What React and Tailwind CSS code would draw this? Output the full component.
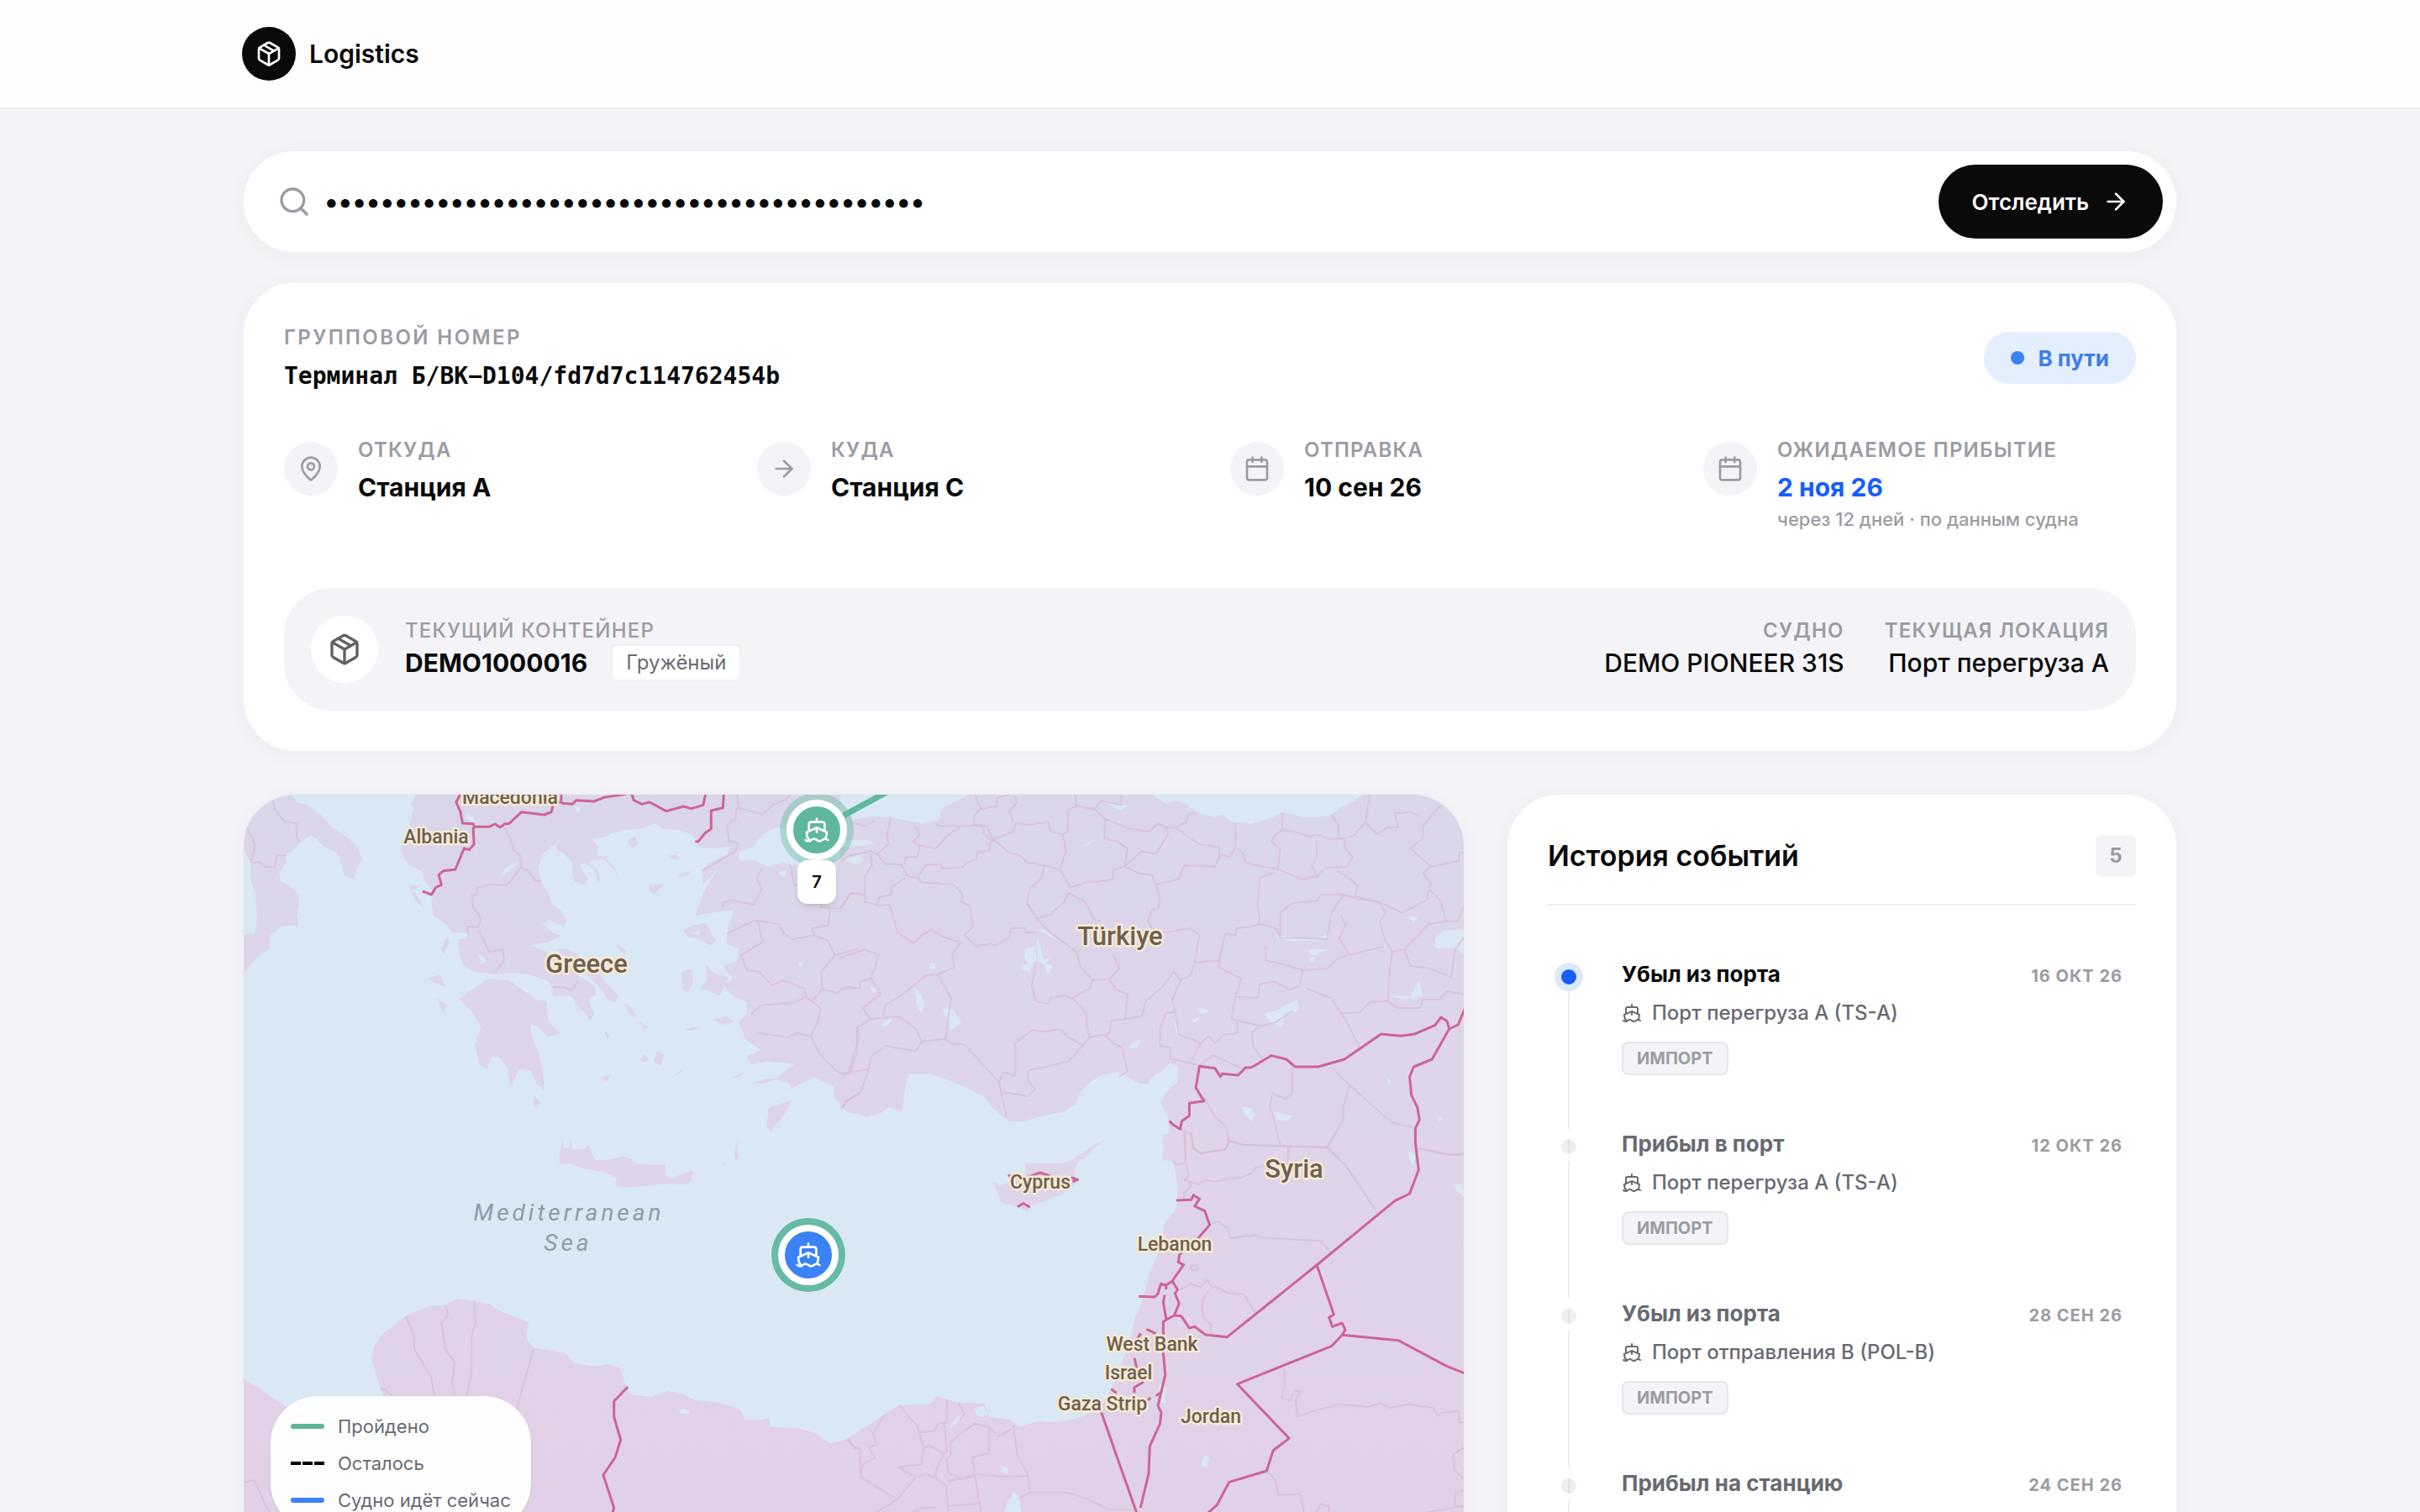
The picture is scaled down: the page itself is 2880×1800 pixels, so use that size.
import { useState } from 'react';
import { ArrowRight, Calendar, MapPin, Package, Search, Ship, TrainFront } from 'lucide-react';

const events = [
  { id: 1, title: 'Убыл из порта', place: 'Порт перегруза А (TS-A)', date: '16 ОКТ 26', icon: Ship, tag: 'ИМПОРТ' },
  { id: 2, title: 'Прибыл в порт', place: 'Порт перегруза А (TS-A)', date: '12 ОКТ 26', icon: Ship, tag: 'ИМПОРТ' },
  { id: 3, title: 'Убыл из порта', place: 'Порт отправления В (POL-B)', date: '28 СЕН 26', icon: Ship, tag: 'ИМПОРТ' },
  { id: 4, title: 'Прибыл на станцию', place: 'Станция В (ST-B)', date: '24 СЕН 26', icon: TrainFront, tag: 'ИМПОРТ' },
  { id: 5, title: 'Убыл со станции', place: 'Станция А (ST-A)', date: '10 СЕН 26', icon: TrainFront, tag: 'ИМПОРТ' },
];

// The map is drawn from four tiles, each with its own coordinate grid
const tiles = [
  {
    id: 'nw',
    transform: 'translate(-10 -16) scale(0.4719 0.33333)',
    fill: 'url(#land-north)',
    land: [
      'M22 40H140L155 75L180 85L215 120L235 150L260 180L290 210L310 240L320 280L305 320L300 352L275 335L270 310L265 275L250 250L220 230L205 205L190 195L165 215L150 240L125 265L130 290L110 330L115 360L140 375L160 410V450L155 480L160 515H140L115 520L90 545L85 600L60 625L40 650L22 690V545H50L55 480L50 400L38 350L40 290L30 270L22 240Z',
      'M455 40L445 80L450 100L440 150L430 200L418 240L420 260L440 300L470 320L480 360L500 400L495 440L500 480L535 515L545 540H585V560L560 565L565 620L575 660L600 680L660 690L700 685L740 690L760 700L790 715L800 740L800 770L830 765L850 770L860 800L880 825L895 855L905 830L890 780L910 760L905 730L870 700L845 650L800 620L770 600L745 585L790 575L820 552L800 540L775 510L790 495L830 520L835 500L820 460L800 440L790 400L770 360L765 310L775 260L810 220V245L830 260L850 290V330L855 360L885 370L890 350L875 320L870 300L880 290L905 315L915 365L920 350L915 320L895 295L900 280H930L955 320L965 335L955 305L935 270L910 265L915 235L900 205L935 200L950 185L980 175L1020 170L1060 150L1080 170L1120 175L1150 190L1165 215V235L1210 240L1250 235L1240 260L1190 295L1178 320L1178 370L1200 340L1225 300L1200 350L1180 400L1160 480L1200 470L1260 460L1250 490L1240 545V580L1270 600L1265 640L1230 660L1245 690L1255 705L1230 730L1260 770L1290 790V830L1270 860L1285 920L1300 935L1325 960L1290 985L1300 1010L1340 1000L1410 1010L1380 1040L1360 1065L1400 1080V1100L1440 1070L1460 1060L1510 1090V1130L1540 1180L1570 1190V40Z',
      'M600 740L640 705L690 710L720 740L760 780L785 785L790 860L820 900L790 915L765 880L745 865L750 920L765 970L775 1030L780 1105L760 1080L745 1035L715 1030L705 1060L695 1095L685 1020L665 985H645L635 1030L615 1010L605 940L620 880L600 830L580 800L565 780L590 750Z',
      'M810 600L840 600L900 650L930 710L965 765L960 790L940 780L915 730L880 680L840 640Z',
      'M1130 530L1155 515L1185 505L1200 540L1212 570L1200 588L1170 565L1140 555Z',
      'M1125 680L1150 670L1155 720L1140 752L1128 745Z',
      'M1185 655L1210 690L1245 700L1222 765L1195 750L1172 740L1190 710Z',
      'M515 690L530 735L500 718L485 705Z',
      'M510 775L535 800L525 825L515 800Z',
      'M436 372L468 372L450 390L475 450L455 430Z',
      'M518 600L535 555L540 575L525 620Z',
      'M1345 1165L1402 1140L1385 1190L1350 1250L1340 1240Z',
      'M755 1125L768 1145L760 1170L750 1155Z',
      'M1063 965L1082 975L1072 1018L1055 1000Z',
      'M1030 975L1042 990L1032 1008L1022 995Z',
      'M1205 850L1240 842L1260 858L1230 870Z',
      'M1135 885L1172 875L1150 895Z',
      'M1300 1080L1330 1065L1375 1060L1330 1080Z',
      'M1250 1060L1288 1038L1270 1058Z',
      'M992 205L1008 198L1018 225L1003 238L990 225Z',
      'M1045 370L1082 366L1070 385L1058 402L1043 392Z',
      'M1095 265L1112 262L1118 276L1100 280Z',
      'M1115 335L1148 320L1140 340L1120 345Z',
      'M962 580L985 605L982 620L965 598Z',
      'M980 792L1000 810L1012 845L995 835Z',
      'M1015 855L1045 882L1030 885Z',
      'M930 890L945 905L940 925Z',
      'M925 1055L945 1050L942 1070L928 1068Z',
      'M1105 1050L1132 1025L1120 1045Z',
    ],
    water: [
      'M1270 255L1305 235L1330 190L1365 165L1400 172L1420 215L1470 225L1570 240V290L1500 280L1420 300L1380 290L1340 305L1310 282L1270 285Z',
      'M668 345L680 310L715 285L700 310Z',
      'M580 110L600 130L608 150L585 135Z',
      'M858 90L872 95L862 115Z',
      'M1368 325L1390 318L1385 345Z',
      'M1420 650L1435 645L1425 665Z',
      'M612 615L635 640L620 655Z',
      'M1155 540L1175 530L1168 552Z',
    ],
    areas: [
      'M95 70L100 100L125 145L155 150V200L162 215',
      'M22 150L35 180L50 230L40 290H65L75 305H100L105 265H130',
      'M680 165L697 215L700 245L718 265L722 300L715 320L685 372L645 368L610 380L608 405H597L600 450L620 490L612 520H585V545',
      'M720 310L740 320L755 355L772 358',
      'M612 530L628 570L640 610L675 600L678 640L657 680',
      'M800 735H830L850 748L865 710',
      'M1265 46L1270 95L1330 120L1355 85L1390 65L1400 46',
      'M1265 95L1262 135L1240 155L1245 215L1268 220L1262 250L1178 320',
      'M1330 310L1315 345L1328 385L1308 440L1250 425L1230 435L1228 460',
      'M1568 400L1550 405L1525 455L1475 450L1478 430L1410 370L1400 300',
      'M1500 460L1495 515L1455 525L1460 550L1405 565L1385 545L1370 510L1325 500L1310 497L1240 545',
      'M1318 500L1330 575L1275 622L1290 675L1320 680L1355 730L1380 710L1435 740L1440 770L1475 810L1470 860L1450 910L1415 900L1395 915L1350 905L1315 900',
      'M1440 770L1410 790L1325 800L1300 835',
      'M1460 550L1495 570L1512 622L1478 680L1480 745L1455 785',
      'M1512 622L1570 600',
      'M1480 745L1520 755L1540 735L1570 740',
      'M1450 910L1480 985L1520 1040L1550 1045L1568 970V880',
      'M1568 1120L1540 1140L1530 1170',
    ],
    borders: [
      'M570 40L557 75L568 110L573 150L600 152L603 163H640L655 153L668 165L680 152H690L722 110L780 120L797 110L803 78L822 75V40',
      'M822 78L850 82L860 68L905 72L930 58L985 46',
      'M1000 46L1005 68L1025 82L1045 75L1087 107L1130 90L1150 98L1180 85L1187 40',
      'M1232 40L1230 95L1200 105V170L1185 185L1168 215H1160',
      'M600 163L602 225L590 245L577 240L555 315L525 320L513 335L520 370L505 380L495 405L472 393',
    ],
  },
  {
    id: 'ne',
    transform: 'translate(710 -16) scale(0.4847 0.33333)',
    fill: 'url(#land-north)',
    land: [
      'M0 40H1534V1354H790L795 1300L808 1270L805 1200L785 1150L800 1110L828 1075V1020L810 1005L790 1035L770 1050L755 1080H735L710 1060L680 1040L640 1050L610 1080L590 1110L580 1150L550 1180L500 1195L450 1215H415L380 1175L355 1130L310 1095L270 1070L220 1045H170L160 1090L155 1150L150 1180L120 1165L100 1185L65 1200L30 1180L0 1170Z',
      'M648 1283L620 1300L575 1350H600L622 1312Z',
    ],
    water: [
      'M0 40H325L280 75L250 95L240 140L200 150L160 140L130 130L80 125L40 135L0 120Z',
      'M760 40L800 80L825 68L850 85L880 115L920 128L935 118L960 145L1010 152L1060 130L1085 110L1140 130L1200 125L1235 90L1260 70L1290 40Z',
      'M0 212L60 210L85 222L50 232H0Z',
      'M15 270L50 268L58 285L35 297L15 285Z',
      'M455 598L478 590L482 640L462 660L452 630Z',
      'M445 655L472 655L465 680L448 672Z',
      'M183 740L200 765L207 805L198 828L188 800Z',
      'M250 805L280 820L297 865L270 888L262 850Z',
      'M100 868L130 842L118 870L105 880Z',
      'M218 652L234 650L232 672L220 670Z',
      'M483 560L492 590L498 640L520 625L505 650L522 660L510 690L500 655L484 640Z',
      'M485 530L500 530L538 570L520 558Z',
      'M1070 550L1130 562L1180 560L1200 540L1195 568L1110 572L1072 562Z',
      'M1150 600L1200 600L1165 620L1150 615Z',
      'M1148 630L1168 628L1158 650Z',
      'M1042 830L1075 815L1100 795L1120 780L1128 815L1090 840L1085 878L1055 860Z',
      'M880 810L905 815L895 832L882 828Z',
      'M862 855L885 840L872 862Z',
      'M1460 560L1480 535L1530 528V620L1515 598H1462Z',
      'M1395 480L1418 490L1405 505Z',
      'M1345 765L1400 768L1420 710L1432 770L1380 778Z',
      'M985 1165L1012 1168L1018 1190L1012 1215L995 1195Z',
      'M1062 1180L1112 1195L1095 1215L1075 1208Z',
      'M710 945L740 920L728 950L712 955Z',
      'M595 235L622 205L612 225Z',
      'M650 70L680 80L705 88L690 105L668 92Z',
      'M1466 1195L1482 1208L1470 1215Z',
      'M250 360L285 365L290 375L255 368Z',
      'M72 735L88 740L82 758Z',
      'M1340 1058L1352 1070L1348 1088Z',
      'M815 845L830 880L838 908L828 905Z',
    ],
    areas: [
      'M0 285L25 265L75 250L90 260L110 295L150 298L165 340L190 345L200 362L280 368L300 405L298 430L318 445L325 520L305 550L335 590L370 580L380 588L415 560L420 525H455V540H480',
      'M125 130L115 185L118 225L90 260',
      'M0 455L25 400L62 405L60 430L95 445L120 440L130 480L140 540L180 578L200 550L222 530L260 560L295 575L275 620L280 665L240 690L210 693L150 765L110 800L105 845',
      'M75 258L78 300L60 340V405',
      'M90 440L95 415L125 405V380L160 345',
      'M235 150L240 160H350L352 185L370 210L425 180L430 150L465 155L510 145L518 180L545 190L555 250L540 315L500 300L460 290L440 265L415 255L378 210L365 225L368 245L335 255V280L310 290L300 308L250 312L248 298H210L190 345',
      'M185 160L195 190L180 215L195 230L235 240L262 195L295 160',
      'M195 230L190 270L160 272L158 298',
      'M330 46L345 98L385 90V60L420 46',
      'M425 46L435 75L415 105L425 145',
      'M578 46V88L560 105L558 180L545 190M578 88L625 100L650 135L710 170L760 180L780 150L800 165H825L850 145L855 118L875 115',
      'M625 100L640 70L690 85V46',
      'M345 98L328 125V155L360 160L375 210',
      'M650 135L648 205L680 215L705 240L698 305L735 330L765 335L775 370L830 350L845 300L920 305L930 270V235L880 225L850 195L825 168',
      'M698 305L740 250L775 260L805 190L800 165',
      'M930 270L940 262L955 272L970 238V150',
      'M975 238L990 260L995 292L1075 315L1135 350L1170 340L1190 310L1245 305L1258 270L1240 240L1238 205L1205 208L1170 190L1150 198L1110 178L1085 175V110',
      'M1085 175L1070 190L1058 215L1080 240L1075 315',
      'M1170 210V270L1158 300L1170 340',
      'M1238 205L1260 195L1290 145L1315 190L1345 165H1370L1362 115L1400 110L1425 125',
      'M1205 120L1222 150L1225 205M1300 46L1290 145',
      'M1475 85L1430 160V205L1400 240L1450 305L1520 285V255H1530',
      'M1450 305L1430 328L1450 365L1440 425L1380 470L1335 440L1265 410L1270 375L1250 345L1220 320',
      'M1450 390L1475 430L1487 500L1445 510L1420 548L1385 600L1355 610L1335 560L1325 500L1340 470L1322 430',
      'M1487 500H1515L1530 450',
      'M540 315L565 380L605 360L635 358L670 350V315L698 305',
      'M500 300L495 345L465 385L458 435L485 495L520 545L580 610L590 665L620 710L660 708L685 670L670 615',
      'M485 490L515 475L548 435L560 400L600 430L625 495L640 500',
      'M775 370L785 420L780 455L765 460L755 500L770 535L800 540L860 525L882 550L870 648L930 640L945 545L972 550V525L1010 520L1030 510L1025 440L1030 345L1065 325',
      'M1030 510L1070 525L1080 560L1140 560L1195 565L1205 475L1235 405H1180L1170 428L1110 435L1080 470V560',
      'M1235 405L1270 420L1325 430M1230 480L1240 515L1225 560L1250 620L1335 590',
      'M1250 620L1220 635L1195 670L1135 675L1090 655L1045 640V590',
      'M930 640V665L985 705L970 770L1025 775L1030 725L1065 715L1105 745L1130 730L1135 675',
      'M1145 740L1205 775L1240 850L1275 950M1228 830L1275 825L1300 790L1340 785L1370 810H1425L1430 780H1470L1490 750L1530 760',
      'M1355 610L1348 690L1345 785M1385 600L1400 660L1450 670L1500 700L1510 600L1530 560',
      'M970 770L960 850L1035 875L1070 860L1110 820',
      'M868 655L862 690L835 712L820 680L790 735L748 790L742 838L700 850L665 855L662 900L612 915L598 940L560 1000L460 1035V1065L478 1100L460 1125L400 1110',
      'M835 712L815 780L822 825L800 828L785 880V945L810 950V990L880 1015M822 825L832 905L885 935L905 910L920 935L940 905L975 900V860',
      'M885 935L862 1000M880 1015L915 980L940 995L985 1025',
      'M620 710L612 740L570 775L605 830V865L612 915M570 775L550 765L515 775L510 795L480 785L470 730L480 655',
      'M660 708L678 745L705 760L700 850',
      'M240 690L272 775L258 920L200 930L185 965L110 945L75 985L70 1030L20 1040L5 1050',
      'M258 920L275 938L305 940L390 1075L408 1200M390 1075L400 1040L430 1050V935L470 890L500 895L540 885L560 915L598 945',
      'M0 630L60 602L95 620L75 705L48 715V740L20 735L0 745',
      'M75 705L100 760L55 810L75 850L105 845L145 840L185 885L200 930M75 850L42 880L45 920L20 1040',
      'M70 1030L50 1110L15 1145L5 1165',
      'M650 908L670 935L690 950L700 1000L705 1035L685 1055',
      'M1110 1020V1110L1095 1135L1060 1115L1055 1165L1065 1210L1080 1300',
      'M1205 1020L1250 1085L1300 1150L1355 1220L1405 1235M1250 1085L1235 1165V1210L1195 1308L985 1298L955 1285L945 1230L918 1195L895 1130',
      'M1028 875L1010 900L1015 950L1035 990L1040 1015',
      'M835 1243L862 1260L868 1310L885 1328L945 1315L955 1285M845 1250L848 1350M1195 1308L1225 1350M1100 1305V1350M1420 1310L1500 1335H1530',
      'M35 150L60 160L85 140',
    ],
    borders: [
      'M808 1213L815 1225L835 1243L838 1215L857 1195V1150L893 1142L873 1095L882 1018L920 1025L933 1055L938 1045L977 1050L995 1023L1010 1022L1058 980L1095 993L1117 1020H1173L1238 993L1328 903L1377 910L1410 903L1460 872L1475 843L1490 857L1495 885L1517 870L1534 810',
      'M1495 885L1453 993L1408 1020L1398 1055L1402 1120L1417 1165L1422 1210L1412 1240V1262',
    ],
  },
  {
    id: 'sw',
    transform: 'translate(-10 404) scale(0.4719 0.33333)',
    fill: 'url(#land-south)',
    land: [
      'M815 105L820 60L825 20L830 50H842L845 20L850 55H880L888 38L895 45L900 72L910 95L950 90L975 80L1000 90L1010 105L1050 110H1085V150L1100 160L1130 140L1155 130L1150 165L1140 180L1080 178L1000 190H962L960 155L930 135L880 125L850 108Z',
      'M1270 15L1265 58L1270 85L1262 97L1258 60Z',
      'M1225 110L1240 92L1235 105Z',
      'M22 875L60 905L95 945L130 975L200 1010L300 1040H400L372 930L355 860L343 800L350 760L375 710L430 650L490 615L530 610L560 588L600 597L640 605L665 630L700 650L740 672L735 710V735L755 765L830 780L855 820L910 830L940 822L970 835L980 880L995 930L1050 938L1090 918L1130 930L1160 950L1220 960L1275 985L1285 1020H1330L1345 1015L1350 1045L1420 1050L1465 1070L1500 1105L1545 1090L1570 1070V1500H22Z',
    ],
    water: ['M1118 985L1135 980L1147 990L1140 1000L1122 997Z'],
    areas: [
      'M430 650L450 720L452 770L495 870L502 940',
      'M530 612L537 645L520 675L530 770L553 815L547 890L555 940',
      'M603 597L605 675L597 715L595 860L583 940',
      'M752 768L730 880L712 970L710 1005',
      'M22 1245L47 1235L85 1350',
      'M365 910L380 915L395 935',
      'M1545 1090L1555 1115L1570 1125',
    ],
    borders: ['M990 903L955 955V1010L972 1092L958 1155L928 1218L955 1335L945 1390'],
  },
  {
    id: 'se',
    transform: 'translate(710 404) scale(0.4847 0.33333)',
    fill: 'url(#land-south)',
    land: [
      'M795 0L790 30L815 80L822 130L828 180V240L822 275L795 320L790 380L780 430L760 490L748 560L735 620L722 660L715 720L700 780L685 850L665 910L650 950L635 985L600 1005L570 1020L520 1030L490 1025L440 1045L415 1020L365 1010L355 965L325 960H290L262 948L235 935L220 965L145 968L120 990L75 1035L30 1075L0 1100V1500H1534V0Z',
      'M648 28L620 50L590 90L575 120V150L585 165L570 190L545 215L500 240L462 260L460 278L440 262L395 245L385 205L375 170L390 182L415 175L425 150L455 145V105H545L575 90L600 60Z',
    ],
    water: [
      'M330 985L350 968L362 1000L348 1012L335 1005Z',
      'M393 1185L412 1190L410 1215L398 1205Z',
      'M412 1310L425 1280L440 1295L445 1360H400Z',
      'M783 890L800 905L795 965L782 950Z',
      'M885 1185L895 1145L907 1155L900 1190Z',
      'M1505 180L1525 178L1534 225L1515 205Z',
      'M1395 65L1412 70L1408 110L1398 95Z',
      'M268 1050L285 1010L300 1005L285 1035Z',
      'M796 575L802 580L800 600Z',
    ],
    areas: [
      'M862 0L865 50L885 70L945 55L955 25L990 38L1195 48L1240 110L1318 280M1215 0L1195 48M1100 48L1098 110',
      'M845 0L848 100L855 150L845 165L880 180L895 165L930 170L950 160L985 155L1010 140L1020 120L1040 115M815 95L825 110L845 105M855 165L862 185L845 210L842 240',
      'M910 320L930 312L950 335L958 372L1020 360L1030 370L1180 382L1202 420',
      'M862 470L878 468V485L862 488Z',
      'M830 560L860 535L885 548L900 520L912 545L930 550L950 568L990 572L1020 640M905 560L888 595L890 650L910 680V715',
      'M1090 840V895L1085 945L1105 950L1115 915L1130 920L1118 950L1122 1010L1160 990L1225 965L1295 975L1325 962L1350 978L1395 965L1455 978L1465 1005L1480 995L1518 990L1520 1030H1530',
      'M1047 1203L1070 1240L1075 1290L1130 1285L1138 1350M1170 1350L1180 1320L1200 1330V1350M1530 1120L1505 1145L1508 1200L1530 1230M1530 1275L1510 1280L1508 1330L1530 1332M1440 1350L1530 1330',
      'M108 1005L80 1070L88 1110L70 1120L85 1155L55 1180L50 1225L140 1305L90 1350M20 1090L35 1120L48 1125L50 1225',
      'M145 968L165 1005L188 1040L205 1120L200 1180L145 1190L160 1205L185 1225L210 1215L235 1230L260 1255L265 1350M185 1225L140 1305',
      'M262 948V1030L240 1035L232 1060L195 1065M205 1120L220 1115L255 1140L235 1200V1230M255 1035L262 1130L255 1140',
      'M290 960L305 1000L292 1020M270 1100L305 1060L330 1035L365 1045V1140L325 1155L330 1215L300 1230L265 1210L262 1160L272 1145ZM330 1215L410 1225L460 1222M330 1215L345 1350M260 1240L330 1225M265 1328L345 1320',
      'M365 1045L388 1080L420 1055M425 1040L435 1150L460 1215L465 1280L560 1282L600 1300L660 1340H725M465 1280L440 1300M180 1350L200 1335H235',
      'M1415 52L1500 75L1530 70',
    ],
    borders: [
      'M1412 0V30L1420 128L1398 213L1362 238L1170 468L950 725L897 717L870 688L857 693L837 650L820 648',
      'M825 237L862 235L867 218L882 232L870 258L895 275L907 325L880 370L833 430L830 458L843 467L815 525L800 540L787 535L780 570L772 582L733 580',
      'M815 525L828 555L822 570L832 605L820 648L802 662L793 670V780L798 860L785 940L780 970L788 995L785 1035L760 1115L757 1215L737 1335',
      'M797 575L793 600L800 660M800 540V555',
      'M1170 468L1212 645L1200 655L1208 688L1232 675L1240 700L1232 718L1370 737L1490 830L1534 855',
      'M1232 718L1207 757L975 893L1102 1087L1063 1130L1047 1203L955 1243L925 1325L890 1370',
      'M640 990L727 1350L745 1400',
      'M728 735L738 712M752 697L775 713M722 800L728 835M745 885L722 905V925M665 910L678 925M755 950L762 942M775 935L790 920',
      'M435 260L450 248L466 262M460 155L490 138L515 150M567 155L583 163L570 170M413 145L418 152',
    ],
  },
];

const labels = [
  { text: 'Macedonia', x: 317, y: 11, big: false },
  { text: 'Albania', x: 229, y: 58, big: false },
  { text: 'Greece', x: 408, y: 212, big: true },
  { text: 'Türkiye', x: 1043, y: 179, big: true },
  { text: 'Syria', x: 1250, y: 456, big: true },
  { text: 'Cyprus', x: 948, y: 469, big: false },
  { text: 'Lebanon', x: 1108, y: 543, big: false },
  { text: 'West Bank', x: 1081, y: 662, big: false },
  { text: 'Israel', x: 1053, y: 696, big: false },
  { text: 'Gaza Strip', x: 1022, y: 733, big: false },
  { text: 'Jordan', x: 1151, y: 748, big: false },
];

function MapCanvas() {
  return (
    <svg viewBox="0 0 1452 908" preserveAspectRatio="xMinYMin slice" className="block h-full w-full" role="img" aria-label="Карта маршрута">
      <defs>
        <linearGradient id="land-north" gradientUnits="userSpaceOnUse" x1="0" y1="0" x2="0" y2="1350">
          <stop offset="0" stopColor="#dad6ea" />
          <stop offset="1" stopColor="#dfd4e8" />
        </linearGradient>
        <linearGradient id="land-south" gradientUnits="userSpaceOnUse" x1="0" y1="0" x2="0" y2="1350">
          <stop offset="0" stopColor="#dfd4e8" />
          <stop offset="1" stopColor="#e1d1e6" />
        </linearGradient>
      </defs>
      <rect width="1452" height="908" fill="#d9e8f3" />
      {tiles.map(tile => (
        <g key={tile.id} transform={tile.transform}>
          {tile.land.map(d => <path key={d} d={d} fill={tile.fill} />)}
          {tile.water.map(d => <path key={d} d={d} fill="#d9e8f3" />)}
        </g>
      ))}
      {tiles.map(tile => (
        <g key={tile.id} transform={tile.transform} fill="none" strokeLinejoin="round">
          {tile.areas.map(d => (
            <path key={d} d={d} stroke="#d8bfd2" strokeOpacity="0.75" strokeWidth="2" vectorEffect="non-scaling-stroke" />
          ))}
          {tile.borders.map(d => (
            <path key={d} d={d} stroke="#cd6594" strokeWidth="3" vectorEffect="non-scaling-stroke" />
          ))}
        </g>
      ))}
      <g textAnchor="middle" fill="#6e604f" stroke="#f6ead6" strokeWidth="5" strokeLinejoin="round" paintOrder="stroke">
        {labels.map(label => (
          <text
            key={label.text}
            x={label.x}
            y={label.y}
            className={label.big ? 'font-[Roboto] text-[31px] font-medium' : 'font-[Roboto] text-[23px] font-medium'}
          >
            {label.text}
          </text>
        ))}
      </g>
      <g textAnchor="middle" fill="#8f9ba6" className="font-[Roboto] text-[28px] tracking-[4px] italic">
        <text x="387" y="507">Mediterranean</text>
        <text x="386" y="543">Sea</text>
      </g>
      <path d="M682 42L782 -12" stroke="#5fb89d" strokeWidth="7" />
    </svg>
  );
}

function InfoItem({ icon: Icon, label, value, hint, accent }) {
  return (
    <div className="flex gap-6">
      <div className="mt-1.5 flex size-16 shrink-0 items-center justify-center rounded-full bg-[#f4f4f8] text-[#9b9ca2]">
        <Icon className="size-8" />
      </div>
      <dl>
        <dt className="text-[24px] leading-[32px] font-semibold tracking-wider text-[#9b9ca2]">{label}</dt>
        <dd className={accent ? 'mt-2 text-[30px] leading-[40px] font-bold text-[#155dfc]' : 'mt-2 text-[30px] leading-[40px] font-bold'}>
          {value}
        </dd>
        {hint && <dd className="mt-0.5 text-[22px] leading-[32px] font-medium text-[#9b9ca2]">{hint}</dd>}
      </dl>
    </div>
  );
}

function EventRow({ event, current }) {
  const Icon = event.icon;
  return (
    <li className="flex">
      <div className="mr-[46px] ml-2 flex w-[34px] shrink-0 flex-col items-center">
        {current ? (
          <span className="mt-1 flex size-[34px] items-center justify-center rounded-full bg-[#dce8fe]">
            <span className="size-[18px] rounded-full bg-[#155dfc]" />
          </span>
        ) : (
          <span className="mt-1 flex size-[34px] items-center justify-center">
            <span className="flex size-[18px] justify-center rounded-full bg-[#efeff0]">
              <span className="h-full w-0.5 bg-[#e2e2e4]" />
            </span>
          </span>
        )}
        <span className="w-0.5 grow bg-[#eeeef0]" />
      </div>
      <div className="min-w-0 grow pb-16">
        <div className="flex items-baseline justify-between pr-4">
          <h3 className={current ? 'text-[26px] leading-[36px] font-bold' : 'text-[26px] leading-[36px] font-bold text-[#686a71]'}>{event.title}</h3>
          <time className="text-[20px] leading-[32px] font-bold tracking-wider text-[#9b9ca2]">{event.date}</time>
        </div>
        <p className="mt-3 flex items-center gap-3 text-[24px] leading-[32px] font-medium text-[#686a71]">
          <Icon className="size-6" />
          {event.place}
        </p>
        <span className="mt-[18px] flex h-10 w-fit items-center rounded-lg border-2 border-[#e6e6ea] bg-[#f4f4f8] px-4 text-[20px] font-bold text-[#9b9ca2]">
          {event.tag}
        </span>
      </div>
    </li>
  );
}

export default function App() {
  const [query, setQuery] = useState('demo-tracking-number-0000000000000000000016');

  const handleSubmit = e => {
    e.preventDefault();
  };

  return (
    <div className="h-screen overflow-y-auto bg-[#f4f4f8] font-[Inter,sans-serif] text-[#0a0a0a] [scrollbar-width:none]">
      <header className="border-b-2 border-[#eeeef1] bg-[#fdfdfd]">
        <div className="mx-auto flex h-32 max-w-[2304px] items-center gap-4">
          <div className="flex size-16 items-center justify-center rounded-full bg-[#0a0a0a] text-white">
            <Package className="size-8" />
          </div>
          <span className="text-[30px] font-semibold">Logistics</span>
        </div>
      </header>

      <main className="mx-auto max-w-[2304px] py-12">
        <form onSubmit={handleSubmit} className="flex items-center rounded-[64px] border-2 border-[#f1f1f3] bg-white p-4 pl-10 shadow-[0_4px_24px_rgba(0,0,0,0.03)]">
          <label htmlFor="tracking" className="text-[#9b9ca2]">
            <Search className="size-10" role="img" aria-label="Номер отслеживания" />
          </label>
          <input
            id="tracking"
            type="password"
            autoComplete="off"
            value={query}
            onChange={e => setQuery(e.target.value)}
            className="mx-4 h-[88px] grow bg-transparent text-[33px] font-semibold outline-none"
          />
          <button type="submit" className="flex h-[88px] items-center gap-4 rounded-full bg-[#0a0a0a] px-10 text-[26px] font-semibold text-white">
            Отследить
            <ArrowRight className="size-8" />
          </button>
        </form>

        <section className="mt-8 rounded-[64px] border-2 border-[#f1f1f3] bg-white p-12 shadow-[0_4px_24px_rgba(0,0,0,0.03)]">
          <div className="flex items-center justify-between">
            <div>
              <p className="text-[24px] leading-[36px] font-semibold tracking-widest text-[#9b9ca2]">ГРУППОВОЙ НОМЕР</p>
              <h1 className="mt-2 font-['DejaVu_Sans_Mono',monospace] text-[28px] leading-[40px] font-bold">Терминал Б/ВК−D104/fd7d7c114762454b</h1>
            </div>
            <span className="flex h-[62px] items-center gap-4 rounded-full bg-[#e5eefd] px-8 text-[26px] font-bold text-[#3f7de8]">
              <span className="size-4 rounded-full bg-[#3b82f6]" />
              В пути
            </span>
          </div>

          <div className="mt-13 grid grid-cols-4 gap-12">
            <InfoItem icon={MapPin} label="ОТКУДА" value="Станция А" />
            <InfoItem icon={ArrowRight} label="КУДА" value="Станция С" />
            <InfoItem icon={Calendar} label="ОТПРАВКА" value="10 сен 26" />
            <InfoItem icon={Calendar} label="ОЖИДАЕМОЕ ПРИБЫТИЕ" value="2 ноя 26" hint="через 12 дней · по данным судна" accent />
          </div>

          <div className="mt-[66px] flex h-[146px] items-center justify-between rounded-[56px] bg-[#f4f4f8] px-8">
            <div className="flex items-center gap-8">
              <div className="flex size-20 items-center justify-center rounded-full bg-white text-[#606166]">
                <Package className="size-10" />
              </div>
              <div>
                <p className="text-[24px] leading-[32px] font-medium tracking-wider text-[#9b9ca2]">ТЕКУЩИЙ КОНТЕЙНЕР</p>
                <p className="flex items-center gap-7">
                  <span className="text-[30px] leading-[44px] font-bold">DEMO1000016</span>
                  <span className="rounded-lg border-2 border-[#f0f0f3] bg-white px-4 text-[24px] leading-[40px] text-[#686a71]">Гружёный</span>
                </p>
              </div>
            </div>
            <div className="flex gap-12 text-right">
              <div>
                <p className="text-[24px] leading-[32px] font-semibold tracking-wider text-[#9b9ca2]">СУДНО</p>
                <p className="text-[30px] leading-[44px] font-medium">DEMO PIONEER 31S</p>
              </div>
              <div>
                <p className="text-[24px] leading-[32px] font-semibold tracking-wider text-[#9b9ca2]">ТЕКУЩАЯ ЛОКАЦИЯ</p>
                <p className="text-[30px] leading-[44px] font-medium">Порт перегруза А</p>
              </div>
            </div>
          </div>
        </section>

        <div className="mt-12 grid grid-cols-[1fr_800px] items-start gap-12">
          <section className="relative h-[912px] overflow-hidden rounded-[64px] border-2 border-[#eeeef2] shadow-[0_4px_24px_rgba(0,0,0,0.03)]">
            <MapCanvas />
            {/* route points */}
            <div className="absolute top-[-2px] left-[638px] flex size-[88px] items-center justify-center rounded-full bg-[#5fb89d]/40">
              <span className="flex size-[72px] items-center justify-center rounded-full border-8 border-white bg-[#5fb89d] text-white">
                <Ship className="size-8" />
              </span>
            </div>
            <span className="absolute top-[78px] left-[659px] flex h-[52px] w-[46px] items-center justify-center rounded-xl bg-white text-[20px] font-semibold shadow-md">
              7
            </span>
            <div className="absolute top-[504px] left-[628px] flex size-[88px] items-center justify-center rounded-full bg-[#66bba3]">
              <span className="flex size-[72px] items-center justify-center rounded-full border-8 border-white bg-[#3b82f6] text-white">
                <Ship className="size-8" />
              </span>
            </div>
            <ul className="absolute bottom-8 left-8 flex flex-col gap-3 rounded-[56px] bg-white/95 px-6 py-5 text-[22px] leading-[32px] text-[#686a71] shadow-sm">
              <li className="flex items-center gap-4">
                <span className="h-1.5 w-10 rounded-full bg-[#5fb49a]" />
                Пройдено
              </li>
              <li className="flex items-center gap-4">
                <span className="flex w-10 gap-0.5">
                  <span className="h-1 grow bg-black" />
                  <span className="h-1 grow bg-black" />
                  <span className="h-1 grow bg-black" />
                </span>
                Осталось
              </li>
              <li className="flex items-center gap-4">
                <span className="h-1.5 w-10 rounded-full bg-[#3b82f6]" />
                Судно идёт сейчас
              </li>
            </ul>
          </section>

          <section className="rounded-[64px] border-2 border-[#f1f1f3] bg-white p-12 shadow-[0_4px_24px_rgba(0,0,0,0.03)]">
            <div className="flex items-center justify-between border-b-2 border-[#eeeef0] pb-8">
              <h2 className="text-[34px] leading-[50px] font-semibold">История событий</h2>
              <span className="flex h-[50px] w-12 items-center justify-center rounded-lg bg-[#f4f4f8] text-[24px] font-bold text-[#9b9ca2]">5</span>
            </div>
            <ol className="pt-16">
              {events.map((event, i) => <EventRow key={event.id} event={event} current={i === 0} />)}
            </ol>
          </section>
        </div>
      </main>
    </div>
  );
}
